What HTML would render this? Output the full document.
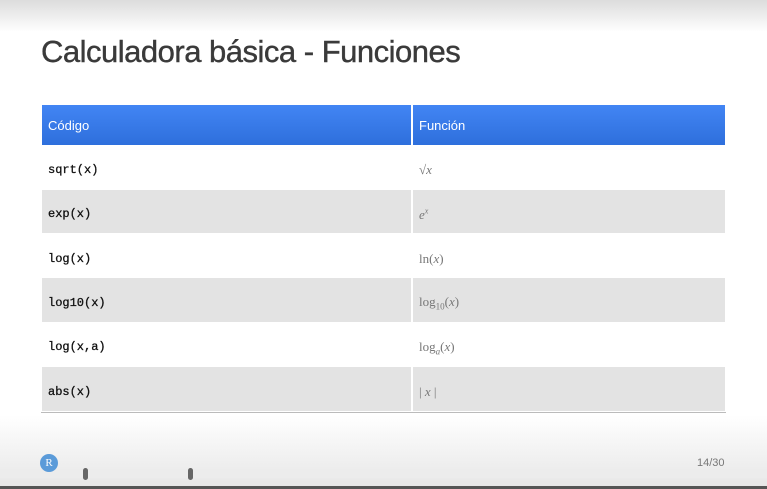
<!DOCTYPE html>
<html><head><style>
*{margin:0;padding:0;box-sizing:border-box}
body{width:767px;height:489px;overflow:hidden;position:relative;background:#fff;font-family:"Liberation Sans",sans-serif}
.top{position:absolute;left:0;top:0;width:767px;height:32px;background:linear-gradient(#dcdcdc,#fff)}
.bot{position:absolute;left:0;top:415px;width:767px;height:74px;background:linear-gradient(#fff,#e6e6e6)}
h1{position:absolute;left:41px;top:34px;font-size:31px;font-weight:normal;color:#3a3a3a;letter-spacing:-0.5px;-webkit-text-stroke:0.4px #3a3a3a}
table{position:absolute;left:42px;top:105px;width:683px;border-collapse:collapse}
th{height:40px;background:linear-gradient(#4285f4,#2e6fdc);color:#fff;font-weight:normal;text-align:left;font-size:13px;padding-left:6px;padding-top:2px;border-right:2px solid #fff}
td{height:44.3px;padding-left:6px;padding-top:6px;border-right:2px solid #fff;border-top:1px solid #fff}
th:last-child,td:last-child{border-right:none}
td:first-child{font-family:"Liberation Mono",monospace;font-size:12px;color:#111;width:370px;-webkit-text-stroke:0.3px #111}
td:last-child{font-family:"Liberation Serif",serif;font-size:13px;color:#777}
tr:nth-child(odd) td{background:#e3e3e3}
tr.w td{background:#fff}
.line{position:absolute;left:41px;top:412px;width:685px;height:1px;background:#bbb}
.bar{position:absolute;left:0;top:471px;width:767px;height:7px;background:#ececec}
.dark{position:absolute;left:0;top:486px;width:767px;height:3px;background:#555}
.r{position:absolute;left:40px;top:454px;width:18px;height:18px;border-radius:50%;background:#5b9bd9;color:#fff;font-family:"Liberation Serif",serif;font-size:11px;text-align:center;line-height:18px}
.k{position:absolute;top:468px;width:5px;height:12px;border-radius:3px;background:#666}
.pg{position:absolute;left:697px;top:457px;font-size:11px;color:#777}
</style></head><body>
<div class="top"></div><div class="bot"></div>
<h1>Calculadora básica - Funciones</h1>
<table>
<tr><th>Código</th><th>Función</th></tr>
<tr class="w"><td>sqrt(x)</td><td>√<i>x</i></td></tr>
<tr><td>exp(x)</td><td><i>e<sup style="font-size:8px">x</sup></i></td></tr>
<tr class="w"><td>log(x)</td><td>ln(<i>x</i>)</td></tr>
<tr><td>log10(x)</td><td>log<sub style="font-size:9px">10</sub>(<i>x</i>)</td></tr>
<tr class="w"><td>log(x,a)</td><td>log<sub style="font-size:9px"><i>a</i></sub>(<i>x</i>)</td></tr>
<tr><td>abs(x)</td><td>| <i>x</i> |</td></tr>
</table>
<div class="line"></div>
<div class="bar"></div><div class="dark"></div>
<div class="r">R</div>
<div class="k" style="left:83px"></div><div class="k" style="left:188px"></div>
<div class="pg">14/30</div>
</body></html>
